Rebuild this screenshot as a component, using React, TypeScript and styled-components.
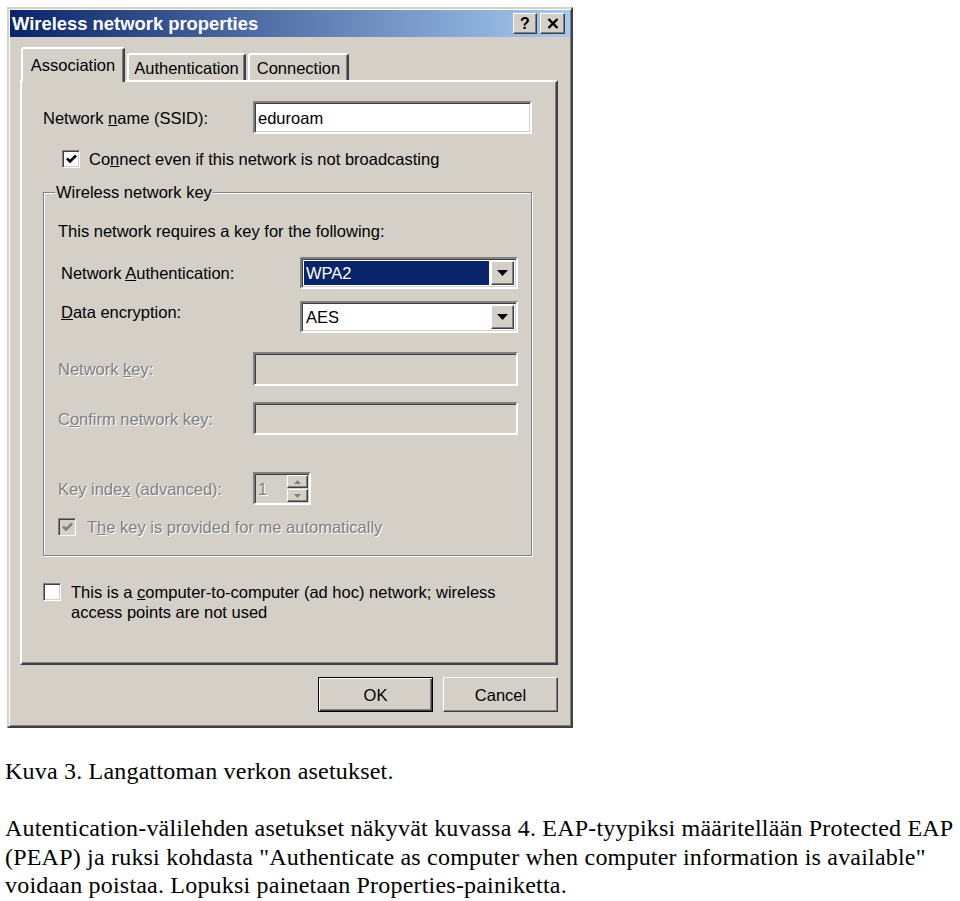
import React, { FC, ReactNode } from "react"
import styled, { createGlobalStyle, css } from "styled-components"

const face = "#d4d0c8"
const shade = "#808080"
const dark = "#404040"
const navy = "#0a246a"

const GlobalStyle = createGlobalStyle`
  body {
    margin: 0;
    background: #fff;
  }
`

const raised = css`
  border: 1px solid;
  border-color: #fff ${dark} ${dark} #fff;
  box-shadow: inset -1px -1px ${shade};
  background: ${face};
`

const sunken = css`
  border: 2px solid;
  border-color: ${shade} #fff #fff ${shade};
  box-shadow: inset 1px 1px ${dark}, inset -1px -1px ${face};
`

const Page = styled.div`
  padding: 7px 0 0 5px;
`

const Dialog = styled.div`
  box-sizing: border-box;
  width: 566px;
  margin-left: 2px;
  padding: 1px;
  background: ${face};
  border: 2px solid;
  border-color: ${face} ${dark} ${dark} ${face};
  box-shadow: inset 1px 1px #fff, inset -1px -1px ${shade};
  font-family: "Liberation Sans", Arial, sans-serif;
  font-size: 16.5px;
  line-height: 20px;
  color: #000;
`

const TitleBar = styled.div`
  display: flex;
  align-items: center;
  height: 27px;
  padding: 0 5px 0 2px;
  background: linear-gradient(to right, ${navy}, #a6caf0);
  color: #fff;
  font-weight: bold;
  font-size: 18.4px;
`

const TitleText = styled.div`
  flex: 1;
`

const TitleButton = styled.div<{ $width: number; $gap?: number }>`
  ${raised};
  box-sizing: border-box;
  width: ${p => p.$width}px;
  height: 21px;
  margin-left: ${p => p.$gap ?? 0}px;
  display: flex;
  align-items: center;
  justify-content: center;
  color: #000;
  font-size: 16px;
`

const Body = styled.div`
  padding: 10px 12px 13px 10px;
`

const TabRow = styled.div`
  display: flex;
  align-items: flex-end;
  gap: 2px;
  height: 33px;
  padding-left: 1px;
`

const Tab = styled.div<{ $active?: boolean; $width: number }>`
  box-sizing: border-box;
  position: relative;
  z-index: ${p => (p.$active ? 1 : 0)};
  width: ${p => p.$width}px;
  height: ${p => (p.$active ? 35 : 27)}px;
  margin-bottom: ${p => (p.$active ? -2 : 0)}px;
  padding-bottom: ${p => (p.$active ? 2 : 0)}px;
  display: flex;
  align-items: center;
  justify-content: center;
  background: ${face};
  border: 2px solid;
  border-bottom: none;
  border-color: #fff ${dark} transparent #fff;
  border-radius: 3px 3px 0 0;
  box-shadow: inset -1px 0 ${shade};
`

const Panel = styled.div`
  box-sizing: border-box;
  height: 585px;
  padding: 19px 0 0 21px;
  border: 2px solid;
  border-color: #fff ${dark} ${dark} #fff;
  box-shadow: inset -1px -1px ${shade};
`

const Row = styled.div<{ $top?: number; $indent?: number; $align?: string }>`
  display: flex;
  align-items: ${p => p.$align ?? "center"};
  margin-top: ${p => p.$top ?? 0}px;
  padding-left: ${p => p.$indent ?? 0}px;
`

const Label = styled.div<{ $width?: number; $disabled?: boolean; $gap?: number; $top?: number }>`
  flex-shrink: 0;
  width: ${p => (p.$width ? `${p.$width}px` : "auto")};
  margin-left: ${p => p.$gap ?? 0}px;
  margin-top: ${p => p.$top ?? 0}px;
  white-space: nowrap;
  color: ${p => (p.$disabled ? shade : "#000")};
  text-shadow: ${p => (p.$disabled ? "1px 1px #fff" : "none")};
`

const U = styled.span`
  text-decoration: underline;
`

const Field = styled.div<{ $width: number; $height: number; $disabled?: boolean }>`
  ${sunken};
  box-sizing: border-box;
  width: ${p => p.$width}px;
  height: ${p => p.$height}px;
  display: flex;
  align-items: center;
  padding-left: 3px;
  background: ${p => (p.$disabled ? face : "#fff")};
  color: ${p => (p.$disabled ? shade : "#000")};
  text-shadow: ${p => (p.$disabled ? "1px 1px #fff" : "none")};
`

const SelectBox = styled(Field)`
  padding: 2px;
  gap: 2px;
`

const SelectValue = styled.div<{ $selected?: boolean }>`
  flex: 1;
  align-self: stretch;
  display: flex;
  align-items: center;
  padding-left: 2px;
  background: ${p => (p.$selected ? navy : "transparent")};
  color: ${p => (p.$selected ? "#fff" : "#000")};
`

const DropButton = styled.div`
  ${raised};
  box-sizing: border-box;
  width: 23px;
  align-self: stretch;
  display: flex;
  align-items: center;
  justify-content: center;
`

const SpinStack = styled.div`
  margin-left: auto;
  margin-right: 1px;
  display: flex;
  flex-direction: column;
  gap: 1px;
`

const SpinButton = styled.div`
  ${raised};
  box-sizing: border-box;
  width: 21px;
  height: 13px;
  display: flex;
  align-items: center;
  justify-content: center;
`

const Box = styled.span<{ $disabled?: boolean; $indent?: number; $top?: number }>`
  border: 1px solid;
  border-color: ${shade} #fff #fff ${shade};
  box-shadow: inset 1px 1px ${dark}, inset -1px -1px ${face};
  box-sizing: border-box;
  flex-shrink: 0;
  width: 18px;
  height: 18px;
  margin-left: ${p => p.$indent ?? 0}px;
  margin-top: ${p => p.$top ?? 0}px;
  display: flex;
  align-items: center;
  justify-content: center;
  background: ${p => (p.$disabled ? face : "#fff")};
`

const GroupBox = styled.fieldset`
  box-sizing: border-box;
  width: 489px;
  min-width: 0;
  margin: 13px 0 0;
  padding: 19px 0 18px 14px;
  border: 1px solid ${shade};
  box-shadow: inset 1px 1px #fff, 1px 1px #fff;
`

const Legend = styled.legend`
  margin-left: -3px;
  padding: 0 1px;
  background: ${face};
`

const ButtonRow = styled.div`
  display: flex;
  justify-content: flex-end;
  gap: 10px;
  margin-top: 12px;
`

const PushButton = styled.div<{ $default?: boolean }>`
  box-sizing: border-box;
  width: 115px;
  height: 35px;
  display: flex;
  align-items: center;
  justify-content: center;
  background: ${face};
  border: 1px solid;
  border-color: ${p => (p.$default ? "#000" : `#fff ${dark} ${dark} #fff`)};
  box-shadow: ${p =>
    p.$default
      ? `inset 1px 1px #fff, inset -1px -1px ${dark}, inset -2px -2px ${shade}`
      : `inset -1px -1px ${shade}`};
`

const Text = styled.div`
  font-family: "Liberation Serif", "Times New Roman", serif;
  font-size: 24px;
  line-height: 28.5px;
  color: #000;
  letter-spacing: 0.2px;
`

const Caption = styled.div`
  margin-top: 29px;
  white-space: nowrap;
`

const Paragraph = styled.div`
  margin-top: 28.5px;
  white-space: nowrap;
`

const Check: FC<{ disabled?: boolean }> = ({ disabled }) => (
  <svg width="11" height="10" viewBox="0 0 11 10">
    <polyline points="1,4.5 4,7.5 10,1.5" fill="none" stroke={disabled ? shade : "#000"} strokeWidth="2.6" />
  </svg>
)

const Arrow: FC<{ up?: boolean; small?: boolean; color?: string }> = ({ up, small, color = "#000" }) => {
  const w = small ? 7 : 11
  const h = small ? 4 : 6
  return (
    <svg width={w} height={h} viewBox={`0 0 ${w} ${h}`}>
      <polygon points={up ? `0,${h} ${w},${h} ${w / 2},0` : `0,0 ${w},0 ${w / 2},${h}`} fill={color} />
    </svg>
  )
}

const Select: FC<{ value: string; selected?: boolean }> = ({ value, selected }) => (
  <SelectBox $width={218} $height={32}>
    <SelectValue $selected={selected}>{value}</SelectValue>
    <DropButton>
      <Arrow />
    </DropButton>
  </SelectBox>
)

const CheckRow: FC<{ checked?: boolean; disabled?: boolean; indent?: number; gap: number; top?: number; children: ReactNode }> = ({
  checked, disabled, indent, gap, top, children
}) => (
  <Row $top={top} $align="flex-start">
    <Box $disabled={disabled} $indent={indent} $top={1}>
      {checked && <Check disabled={disabled} />}
    </Box>
    <Label $disabled={disabled} $gap={gap}>{children}</Label>
  </Row>
)

const App: FC = () => (
  <Page>
    <GlobalStyle />
    <Dialog>
      <TitleBar>
        <TitleText>Wireless network properties</TitleText>
        <TitleButton $width={24}>?</TitleButton>
        <TitleButton $width={25} $gap={3}>
          <svg width="12" height="11" viewBox="0 0 12 11">
            <path d="M1.5 1 L10.5 10 M10.5 1 L1.5 10" stroke="#000" strokeWidth="2.4" />
          </svg>
        </TitleButton>
      </TitleBar>
      <Body>
        <TabRow>
          <Tab $active $width={104}>Association</Tab>
          <Tab $width={119}>Authentication</Tab>
          <Tab $width={101}>Connection</Tab>
        </TabRow>
        <Panel>
          <Row>
            <Label $width={210}>Network <U>n</U>ame (SSID):</Label>
            <Field $width={279} $height={33}>eduroam</Field>
          </Row>
          <CheckRow checked indent={19} gap={9} top={15}>
            Co<U>n</U>nect even if this network is not broadcasting
          </CheckRow>
          <GroupBox>
            <Legend>Wireless network key</Legend>
            <Row>
              <Label>This network requires a key for the following:</Label>
            </Row>
            <Row $top={16} $indent={3}>
              <Label $width={239}>Network <U>A</U>uthentication:</Label>
              <Select value="WPA2" selected />
            </Row>
            <Row $top={12} $indent={3} $align="flex-start">
              <Label $width={239} $top={1}><U>D</U>ata encryption:</Label>
              <Select value="AES" />
            </Row>
            <Row $top={19}>
              <Label $width={195} $disabled>Network <U>k</U>ey:</Label>
              <Field $width={265} $height={34} $disabled />
            </Row>
            <Row $top={16}>
              <Label $width={195} $disabled>C<U>o</U>nfirm network key:</Label>
              <Field $width={265} $height={33} $disabled />
            </Row>
            <Row $top={37}>
              <Label $width={195} $disabled>Key inde<U>x</U> (advanced):</Label>
              <Field $width={58} $height={33} $disabled>
                1
                <SpinStack>
                  <SpinButton><Arrow up small color={shade} /></SpinButton>
                  <SpinButton><Arrow small color={shade} /></SpinButton>
                </SpinStack>
              </Field>
            </Row>
            <CheckRow checked disabled gap={11} top={12}>
              T<U>h</U>e key is provided for me automatically
            </CheckRow>
          </GroupBox>
          <CheckRow gap={10} top={26}>
            This is a <U>c</U>omputer-to-computer (ad hoc) network; wireless
            <br />
            access points are not used
          </CheckRow>
        </Panel>
        <ButtonRow>
          <PushButton $default>OK</PushButton>
          <PushButton>Cancel</PushButton>
        </ButtonRow>
      </Body>
    </Dialog>
    <Text>
      <Caption>Kuva 3. Langattoman verkon asetukset.</Caption>
      <Paragraph>
        Autentication-välilehden asetukset näkyvät kuvassa 4. EAP-tyypiksi määritellään Protected EAP
        <br />
        (PEAP) ja ruksi kohdasta "Authenticate as computer when computer information is available"
        <br />
        voidaan poistaa. Lopuksi painetaan Properties-painiketta.
      </Paragraph>
    </Text>
  </Page>
)

export default App
